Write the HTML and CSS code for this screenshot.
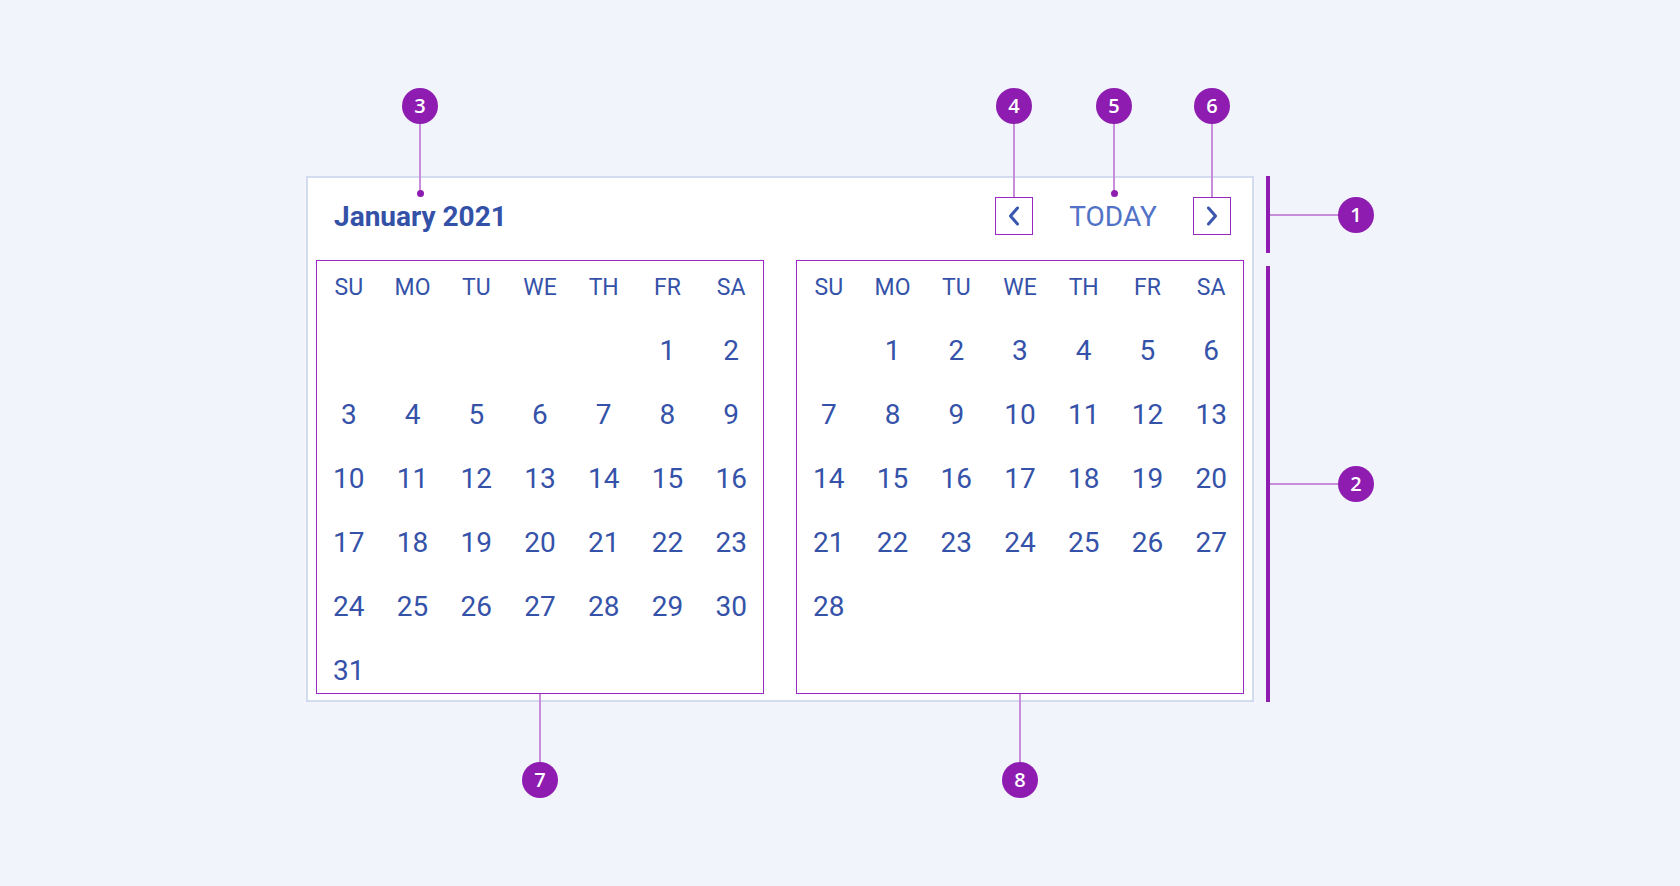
FILE: index.html
```html
<!DOCTYPE html>
<html lang="en">
<head>
    <meta charset="UTF-8">
    <meta name="viewport" content="width=device-width, initial-scale=1.0">
    <title>Calendar anatomy</title>
    <link rel="stylesheet" href="styles.css">
</head>
<body>
    <div class="stage">

        <!-- Calendar -->
        <div class="calendar">
            <div class="cal-header">
                <div class="title">January 2021</div>
                <button class="nav-btn" aria-label="Previous month">
                    <svg width="12" height="20" viewBox="0 0 12 20"><polyline points="9.5,2 2.5,10 9.5,18"/></svg>
                </button>
                <div class="today">TODAY</div>
                <button class="nav-btn" aria-label="Next month">
                    <svg width="12" height="20" viewBox="0 0 12 20"><polyline points="2.5,2 9.5,10 2.5,18"/></svg>
                </button>
            </div>

            <div class="months">
                <div class="month">
                    <div class="wd">SU</div><div class="wd">MO</div><div class="wd">TU</div><div class="wd">WE</div><div class="wd">TH</div><div class="wd">FR</div><div class="wd">SA</div>
                    <div></div><div></div><div></div><div></div><div></div><div class="day">1</div><div class="day">2</div>
                    <div class="day">3</div><div class="day">4</div><div class="day">5</div><div class="day">6</div><div class="day">7</div><div class="day">8</div><div class="day">9</div>
                    <div class="day">10</div><div class="day">11</div><div class="day">12</div><div class="day">13</div><div class="day">14</div><div class="day">15</div><div class="day">16</div>
                    <div class="day">17</div><div class="day">18</div><div class="day">19</div><div class="day">20</div><div class="day">21</div><div class="day">22</div><div class="day">23</div>
                    <div class="day">24</div><div class="day">25</div><div class="day">26</div><div class="day">27</div><div class="day">28</div><div class="day">29</div><div class="day">30</div>
                    <div class="day">31</div>
                </div>
                <div class="month">
                    <div class="wd">SU</div><div class="wd">MO</div><div class="wd">TU</div><div class="wd">WE</div><div class="wd">TH</div><div class="wd">FR</div><div class="wd">SA</div>
                    <div></div><div class="day">1</div><div class="day">2</div><div class="day">3</div><div class="day">4</div><div class="day">5</div><div class="day">6</div>
                    <div class="day">7</div><div class="day">8</div><div class="day">9</div><div class="day">10</div><div class="day">11</div><div class="day">12</div><div class="day">13</div>
                    <div class="day">14</div><div class="day">15</div><div class="day">16</div><div class="day">17</div><div class="day">18</div><div class="day">19</div><div class="day">20</div>
                    <div class="day">21</div><div class="day">22</div><div class="day">23</div><div class="day">24</div><div class="day">25</div><div class="day">26</div><div class="day">27</div>
                    <div class="day">28</div>
                </div>
            </div>
        </div>

        <!-- Annotations -->
        <div class="bar bar-header"></div>
        <div class="bar bar-body"></div>

        <div class="vline line-3"></div>
        <div class="vline line-4"></div>
        <div class="vline line-5"></div>
        <div class="vline line-6"></div>
        <div class="vline line-7"></div>
        <div class="vline line-8"></div>
        <div class="hline line-1"></div>
        <div class="hline line-2"></div>

        <div class="dot dot-3"></div>
        <div class="dot dot-5"></div>

        <div class="badge b1">1</div>
        <div class="badge b2">2</div>
        <div class="badge b3">3</div>
        <div class="badge b4">4</div>
        <div class="badge b5">5</div>
        <div class="badge b6">6</div>
        <div class="badge b7">7</div>
        <div class="badge b8">8</div>
    </div>
</body>
</html>
```

FILE: styles.css
```css
body {
    margin: 0;
    background-color: #f1f4fa;
    font-family: Roboto, "Liberation Sans", sans-serif;
    color: #3552a9;
}
.stage {
    position: relative;
    width: 1680px;
    height: 886px;
    padding: 176px 0 0 306px;
    box-sizing: border-box;
}

/* calendar card */
.calendar {
    width: 948px;
    box-sizing: border-box;
    background: #fff;
    border: 2px solid #d3dcee;
    padding: 0 8px 6px;
}
.cal-header {
    height: 76px;
    display: flex;
    align-items: center;
    padding: 0 13px 0 18px;
}
.title {
    flex: 1;
    font-size: 28px;
    font-weight: 700;
    color: #3451a8;
}
.nav-btn {
    width: 38px;
    height: 38px;
    padding: 0;
    border: 1px solid #9b27bf;
    background: #fff;
    display: flex;
    align-items: center;
    justify-content: center;
    cursor: pointer;
}
.nav-btn svg polyline {
    fill: none;
    stroke: #3a56b0;
    stroke-width: 3;
    stroke-linecap: round;
    stroke-linejoin: round;
}
.today {
    width: 160px;
    text-align: center;
    font-size: 28px;
    color: #5272c7;
}
.months {
    display: flex;
    gap: 32px;
    margin-top: 6px;
}
.month {
    width: 448px;
    height: 434px;
    box-sizing: border-box;
    border: 1px solid #9b27bf;
    display: grid;
    grid-template-columns: repeat(7, 1fr);
    grid-template-rows: repeat(7, 48px);
    row-gap: 16px;
    align-content: start;
}
.wd {
    font-size: 23px;
    line-height: 43px;
    padding-top: 5px;
    text-align: center;
}
.day {
    font-size: 28px;
    line-height: 45px;
    padding-top: 3px;
    text-align: center;
}

/* annotation markers */
.bar {
    position: absolute;
    left: 1266px;
    width: 4px;
    background: #8e1cb0;
}
.bar-header { top: 176px; height: 77px; }
.bar-body { top: 266px; height: 436px; }

.vline, .hline {
    position: absolute;
    background: #c78ddb;
}
.vline { width: 2px; }
.hline { height: 2px; left: 1270px; width: 70px; }
.line-3 { left: 419px; top: 120px; height: 73px; }
.line-4 { left: 1013px; top: 120px; height: 77px; }
.line-5 { left: 1113px; top: 120px; height: 73px; }
.line-6 { left: 1211px; top: 120px; height: 77px; }
.line-7 { left: 539px; top: 694px; height: 72px; }
.line-8 { left: 1019px; top: 694px; height: 72px; }
.line-1 { top: 214px; }
.line-2 { top: 483px; }

.dot {
    position: absolute;
    width: 7px;
    height: 7px;
    border-radius: 50%;
    background: #8e1cb0;
}
.dot-3 { left: 416.5px; top: 189.5px; }
.dot-5 { left: 1110.5px; top: 189.5px; }

.badge {
    position: absolute;
    width: 36px;
    height: 36px;
    margin: -18px 0 0 -18px;
    border-radius: 50%;
    background: #8e1cb0;
    color: #fff;
    font-family: "Open Sans", sans-serif;
    font-weight: 600;
    font-size: 20px;
    line-height: 36px;
    text-align: center;
}
.b1 { left: 1356px; top: 215px; }
.b2 { left: 1356px; top: 484px; }
.b3 { left: 420px; top: 106px; }
.b4 { left: 1014px; top: 106px; }
.b5 { left: 1114px; top: 106px; }
.b6 { left: 1212px; top: 106px; }
.b7 { left: 540px; top: 780px; }
.b8 { left: 1020px; top: 780px; }
```
